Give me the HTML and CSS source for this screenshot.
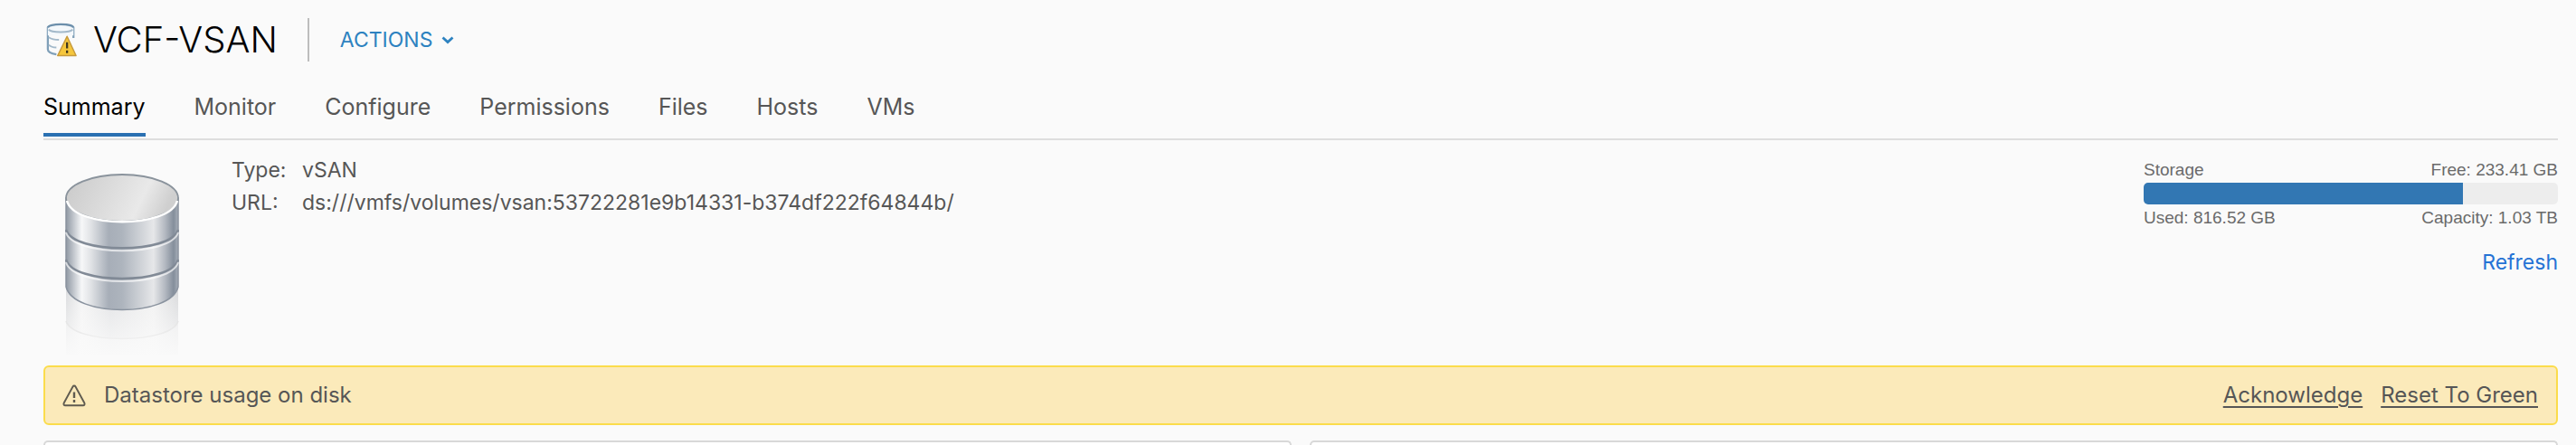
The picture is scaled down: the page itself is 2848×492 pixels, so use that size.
FILE: index.html
```html
<!DOCTYPE html>
<html lang="en">
<head>
<meta charset="utf-8">
<title>VCF-VSAN</title>
<link rel="stylesheet" href="styles.css">
</head>
<body>
<main class="page">
  <header class="header">
    <svg class="object-icon" viewBox="0 0 36 40" aria-hidden="true">
      <path d="M2 6v25c0 3 4 5 10 6M32 6v12" fill="none" stroke="#7f9fb8" stroke-width="2.4"/>
      <path d="M2 6c0-6 30-6 30 0v9H2z" fill="#f4f8fb"/>
      <path d="M2 6c0-5.500 30-5.500 30 0" fill="none" stroke="#6c8fab" stroke-width="2.600"/>
      <path d="M3 8c3 4 25 4 28 0M3 17c3 2 7 3 12 3M3 26c2 2 5 3 9 3" fill="none" stroke="#a3b9ca" stroke-width="2"/>
      <path d="M24.500 16 35 38.500H13.500z" fill="#f5c63c" stroke="#c79a3c" stroke-width="1.600" stroke-linejoin="round"/>
      <path d="M24.500 23v7M24.500 32.500v3" stroke="#40371d" stroke-width="2.400"/>
    </svg>
    <h1 class="title">VCF-VSAN</h1>
    <button class="actions" type="button">ACTIONS
      <svg class="chevron" viewBox="0 0 14 9" aria-hidden="true"><path d="m1.500 1.500 5.500 5 5.500-5" fill="none" stroke="currentColor" stroke-width="2.800"/></svg>
    </button>
  </header>

  <nav class="tabs">
    <a class="tab tab-active" href="#summary" aria-current="page">Summary</a>
    <a class="tab" href="#monitor">Monitor</a>
    <a class="tab" href="#configure">Configure</a>
    <a class="tab" href="#permissions">Permissions</a>
    <a class="tab" href="#files">Files</a>
    <a class="tab" href="#hosts">Hosts</a>
    <a class="tab" href="#vms">VMs</a>
  </nav>

  <section class="summary" id="summary">
    <svg class="disk" viewBox="0 0 126 206" aria-hidden="true">
      <defs>
        <linearGradient id="metal">
          <stop offset="0" stop-color="#8f98a3"/><stop offset=".06" stop-color="#bcc1c8"/>
          <stop offset=".14" stop-color="#f6f7f8"/><stop offset=".22" stop-color="#e1e3e6"/>
          <stop offset=".38" stop-color="#a7aeb8"/><stop offset=".5" stop-color="#adb4bd"/>
          <stop offset=".78" stop-color="#e6e7e9"/><stop offset=".88" stop-color="#b5bac2"/>
          <stop offset=".96" stop-color="#848e9b"/><stop offset="1" stop-color="#a8afb9"/>
        </linearGradient>
        <linearGradient id="lid" x1="0" y1="0" x2="1" y2=".2">
          <stop offset="0" stop-color="#c9c9c9"/><stop offset=".45" stop-color="#dcdcdc"/>
          <stop offset=".75" stop-color="#e9e9e9"/><stop offset="1" stop-color="#cfcfcf"/>
        </linearGradient>
        <linearGradient id="mirror">
          <stop offset="0" stop-color="#dcdddf"/><stop offset=".14" stop-color="#f5f5f5"/>
          <stop offset=".4" stop-color="#e2e3e5"/><stop offset=".78" stop-color="#f2f2f2"/>
          <stop offset="1" stop-color="#dadbdd"/>
        </linearGradient>
        <linearGradient id="fade" x1="0" y1="0" x2="0" y2="1">
          <stop offset="0" stop-color="#fafafa" stop-opacity="0"/><stop offset="1" stop-color="#fafafa"/>
        </linearGradient>
      </defs>
      <path d="M1 125v75h124v-75z" fill="url(#mirror)"/>
      <path d="M1 163c8 26 116 26 124 0v43H1z" fill="#fafafa" opacity=".45"/>
      <path d="M1 163c8 26 116 26 124 0" fill="none" stroke="#d4d4d4" stroke-width="1.500"/>
      <path d="M0 130h126v76H0z" fill="url(#fade)"/>
      <path d="M1 27v98c8 34 116 34 124 0V27z" fill="url(#metal)" stroke="#8a939f" stroke-width="1.500"/>
      <path d="M1 62c8 27 116 27 124 0M1 95c8 28 116 28 124 0" fill="none" stroke="#818a96" stroke-width="2.500"/>
      <path d="M1 65c8 27 116 27 124 0M1 98c8 28 116 28 124 0" fill="none" stroke="#fff" stroke-opacity=".65" stroke-width="2"/>
      <ellipse cx="63" cy="27" rx="62" ry="26" fill="url(#lid)" stroke="#8a939c" stroke-width="1.800"/>
      <path d="M2 30c8 31 114 31 122 0" fill="none" stroke="#fff" stroke-width="2.500"/>
    </svg>
    <dl class="facts">
      <dt>Type:</dt><dd>vSAN</dd>
      <dt>URL:</dt><dd>ds:///vmfs/volumes/vsan:53722281e9b14331-b374df222f64844b/</dd>
    </dl>
    <aside class="storage">
      <div class="legend"><span>Storage</span><span>Free: 233.41 GB</span></div>
      <div class="meter"><div class="meter-fill" style="width:77%"></div></div>
      <div class="legend"><span>Used: 816.52 GB</span><span>Capacity: 1.03 TB</span></div>
      <a class="refresh" href="#refresh">Refresh</a>
    </aside>
  </section>

  <section class="alert" role="alert">
    <svg class="alert-icon" viewBox="0 0 26 25" aria-hidden="true">
      <path d="M11.500 2.500 1.700 20.500c-.7 1.500 0 2.800 1.500 2.800h19.600c1.500 0 2.200-1.300 1.500-2.800L14.500 2.500c-.7-1.300-2.300-1.300-3 0z" fill="none" stroke="#5f5b50" stroke-width="1.900"/>
      <path d="M13 8.500v6.500M13 17v3" stroke="#5f5b50" stroke-width="2.400"/>
    </svg>
    <span class="alert-text">Datastore usage on disk</span>
    <a class="alert-link" href="#acknowledge">Acknowledge</a>
    <a class="alert-link" href="#reset">Reset To Green</a>
  </section>

  <div class="cards"><section class="card"></section><section class="card"></section></div>
</main>
</body>
</html>
```
FILE: styles.css
```css
* { box-sizing: border-box; }

body {
  margin: 0;
  background: #fafafa;
  color: #565656;
  font: 24px/36px Inter, "Liberation Sans", sans-serif;
}

a { color: inherit; text-decoration: none; }

.page {
  display: flex;
  flex-direction: column;
  min-height: 100vh;
  padding: 20px 20px 0 48px;
}

.header { display: flex; align-items: center; height: 48px; }
.object-icon { width: 34px; height: 38px; margin: 0 18px 0 3px; }
.title {
  margin: 0;
  padding-right: 33px;
  border-right: 2px solid #bdbdbd;
  color: #000;
  font-size: 40px;
  font-weight: 300;
  line-height: 48px;
}
.actions {
  display: flex;
  align-items: center;
  gap: 10px;
  margin-left: 34px;
  padding: 0;
  border: 0;
  background: none;
  color: #2d82c0;
  font: 23px/32px Inter, "Liberation Sans", sans-serif;
}
.chevron { width: 14px; height: 9px; }

.tabs {
  display: flex;
  gap: 54px;
  margin-top: 32px;
  padding-bottom: 2px;
  border-bottom: 2px solid #dedede;
  font-size: 25px;
}
.tab { padding-bottom: 11px; border-bottom: 4px solid transparent; }
.tab-active { border-color: #2a70b2; color: #000; }

.summary { display: flex; align-items: flex-start; min-height: 249px; }
.disk { width: 126px; height: 206px; margin: 37px 58px 0 24px; }
.facts {
  display: grid;
  grid-template-columns: 78px auto;
  margin: 15px 0 0;
  font-size: 23px;
}
.facts dd { margin: 0; }

.storage {
  display: flex;
  flex-direction: column;
  width: 458px;
  margin: 20px 0 0 auto;
}
.legend {
  display: flex;
  justify-content: space-between;
  color: #6a6a6a;
  font: 19px/26px "Liberation Sans", Arial, sans-serif;
}
.meter {
  height: 24px;
  margin: 1px 0 2px;
  border-radius: 5px;
  background: #ededed;
  overflow: hidden;
}
.meter-fill { height: 100%; background: #3277b3; }
.refresh { margin-top: 18px; align-self: flex-end; color: #2573d5; font-size: 23px; }

.alert {
  display: flex;
  align-items: center;
  height: 66px;
  padding: 0 20px 0 19px;
  border: 2px solid #fbdc4b;
  border-radius: 6px;
  background: #fbeaba;
}
.alert-icon { width: 26px; height: 25px; margin-right: 20px; }
.alert-text { margin-right: auto; }
.alert-link {
  margin-left: 20px;
  text-decoration: underline;
  text-decoration-thickness: 2px;
  text-underline-offset: 4px;
}

.cards {
  display: grid;
  grid-template-columns: 1fr 1fr;
  flex: 1;
  gap: 20px;
  margin-top: 17px;
}
.card {
  border: 2px solid #d8d8d8;
  border-bottom: 0;
  border-radius: 6px 6px 0 0;
  background: #fff;
}
```
